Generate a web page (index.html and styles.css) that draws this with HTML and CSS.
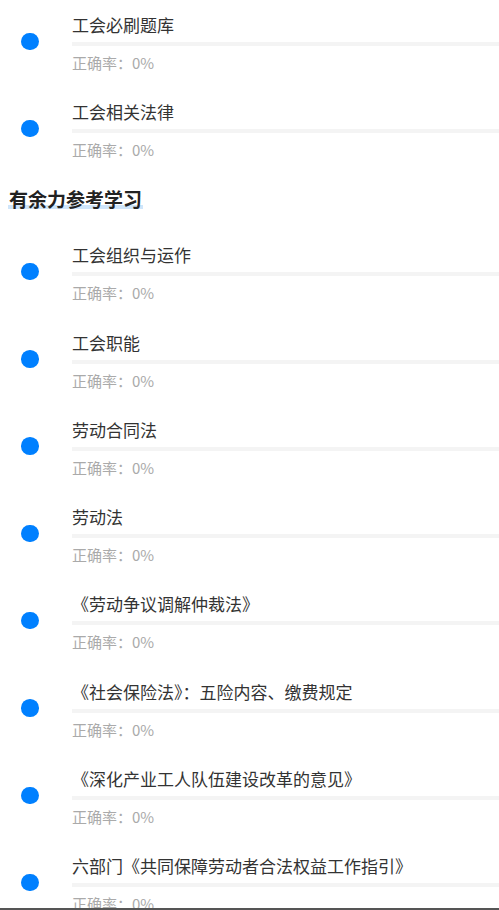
FILE: index.html
```html
<!DOCTYPE html>
<html lang="zh-CN">
<head>
  <meta charset="UTF-8">
  <meta name="viewport" content="width=device-width, initial-scale=1.0">
  <title>学习题库</title>
  <link rel="stylesheet" href="styles.css">
</head>
<body>
  <div class="list">
    <div class="item">
      <span class="dot"></span>
      <div class="info">
        <div class="title">工会必刷题库</div>
        <div class="bar"></div>
        <div class="rate">正确率：0%</div>
      </div>
    </div>
    <div class="item">
      <span class="dot"></span>
      <div class="info">
        <div class="title">工会相关法律</div>
        <div class="bar"></div>
        <div class="rate">正确率：0%</div>
      </div>
    </div>
  </div>

  <h3 class="section"><span>有余力参考学习</span></h3>

  <div class="list">
    <div class="item">
      <span class="dot"></span>
      <div class="info">
        <div class="title">工会组织与运作</div>
        <div class="bar"></div>
        <div class="rate">正确率：0%</div>
      </div>
    </div>
    <div class="item">
      <span class="dot"></span>
      <div class="info">
        <div class="title">工会职能</div>
        <div class="bar"></div>
        <div class="rate">正确率：0%</div>
      </div>
    </div>
    <div class="item">
      <span class="dot"></span>
      <div class="info">
        <div class="title">劳动合同法</div>
        <div class="bar"></div>
        <div class="rate">正确率：0%</div>
      </div>
    </div>
    <div class="item">
      <span class="dot"></span>
      <div class="info">
        <div class="title">劳动法</div>
        <div class="bar"></div>
        <div class="rate">正确率：0%</div>
      </div>
    </div>
    <div class="item">
      <span class="dot"></span>
      <div class="info">
        <div class="title">《劳动争议调解仲裁法》</div>
        <div class="bar"></div>
        <div class="rate">正确率：0%</div>
      </div>
    </div>
    <div class="item">
      <span class="dot"></span>
      <div class="info">
        <div class="title">《社会保险法》：五险内容、缴费规定</div>
        <div class="bar"></div>
        <div class="rate">正确率：0%</div>
      </div>
    </div>
    <div class="item">
      <span class="dot"></span>
      <div class="info">
        <div class="title">《深化产业工人队伍建设改革的意见》</div>
        <div class="bar"></div>
        <div class="rate">正确率：0%</div>
      </div>
    </div>
    <div class="item">
      <span class="dot"></span>
      <div class="info">
        <div class="title">六部门《共同保障劳动者合法权益工作指引》</div>
        <div class="bar"></div>
        <div class="rate">正确率：0%</div>
      </div>
    </div>
  </div>

  <div class="bottom-line"></div>
</body>
</html>
```

FILE: styles.css
```css
body {
  margin: 0;
  font-family: "Noto Sans CJK SC", "Noto Sans", sans-serif;
  background-color: #fff;
  color: #333;
  overflow: hidden;
}

.list {
  display: flex;
  flex-direction: column;
}

.item {
  display: flex;
  height: 87.3px;
  box-sizing: border-box;
  padding-top: 13px;
}

.dot {
  flex: none;
  width: 17.5px;
  height: 17.5px;
  margin: 19.5px 33.5px 0 21px;
  border-radius: 50%;
  background-color: #0080ff;
}

.info {
  flex: 1;
  min-width: 0;
}

.title {
  font-size: 17px;
  line-height: 24px;
  color: #333;
  white-space: nowrap;
}

.bar {
  height: 4px;
  margin-top: 5px;
  background-color: #f4f4f4;
}

.rate {
  margin-top: 6px;
  font-size: 15px;
  line-height: 22px;
  color: #aaa;
}

.section {
  margin: 0;
  padding: 11.7px 0 18px 8px;
  font-size: 19px;
  line-height: 26px;
  font-weight: bold;
  color: #222;
}

.section span {
  padding: 0 1px;
  background: linear-gradient(#cfe5fa, #cfe5fa) no-repeat left bottom 3px / 100% 4px;
  border-radius: 2px;
}

.bottom-line {
  position: fixed;
  left: 0;
  right: 0;
  bottom: 0;
  height: 2px;
  background-color: #555;
}
```
